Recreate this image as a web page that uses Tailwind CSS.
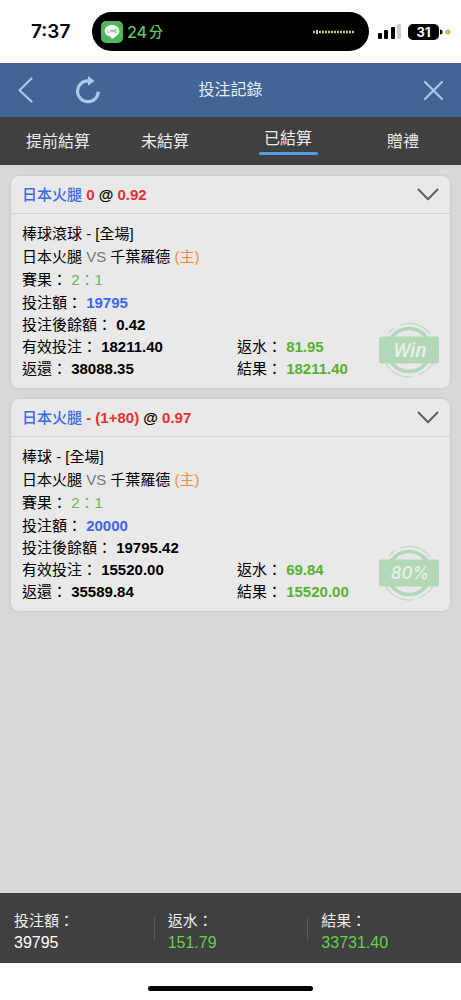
<!DOCTYPE html>
<html lang="zh-Hant">
<head>
  <meta charset="UTF-8">
  <meta name="viewport" content="width=device-width, initial-scale=1.0">
  <title>投注記錄</title>
  <script src="https://cdn.jsdelivr.net/npm/@tailwindcss/browser@4"></script>
</head>
<body class="min-h-screen flex flex-col bg-white text-black text-[15px] font-['Liberation_Sans','Noto_Sans_CJK_TC',sans-serif]">

  <!-- Status bar -->
  <div class="flex items-center h-[63px] pl-[31px] pr-2 font-['Inter','Noto_Sans_CJK_TC',sans-serif]">
    <span class="w-[61px] pt-px text-[19px] font-semibold">7:37</span>
    <div class="flex-1 flex items-center h-[39px] pl-[9px] pr-[14px] rounded-full bg-black">
      <svg class="w-[22px] h-[22px]" viewBox="0 0 22 22">
        <rect width="22" height="22" rx="5" fill="#4fb85c"/>
        <path d="M11 4C6.900 4 3.700 6.600 3.700 9.900c0 2.900 2.600 5.300 6.100 5.700.7.100.6.600.5 1.300-.1.900.3 1.200 1.300.6 2.700-1.600 6.700-4.100 6.700-7.600C18.300 6.600 15.100 4 11 4z" fill="#fff"/>
        <path d="M6.800 8.500v2.800h1.500M9.600 8.500v2.800M10.900 11.300V8.500l2 2.800V8.500M15.700 8.500h-1.500v2.800h1.500M14.200 9.900h1.300" fill="none" stroke="#4fb85c" stroke-width=".8"/>
      </svg>
      <span class="flex items-center gap-[2px] ml-[4px] font-medium text-[#62c466]"><span class="text-base">24</span><span class="text-sm">分</span></span>
      <svg class="ml-auto w-[43px] h-[6px]" viewBox="0 0 43 6">
        <path d="M1 3h42" stroke="#c9d67c" stroke-width="2.400" stroke-dasharray="1.900 1.100"/>
        <path d="M4.950 1v4" stroke="#c9d67c" stroke-width="1.900"/>
      </svg>
    </div>
    <svg class="ml-[9px] w-6 h-4" viewBox="0 0 24 16">
      <rect x="0" y="9" width="4" height="6" rx="1"/>
      <rect x="6" y="6" width="4" height="9" rx="1"/>
      <rect x="13" y="3" width="4" height="12" rx="1"/>
      <rect x="19" y="0" width="4" height="15" rx="1" fill="#cfcfcf"/>
    </svg>
    <span class="ml-[6px] w-[31px] h-4 rounded-[5px] bg-black text-white text-[13px] leading-4 font-bold text-center">31</span>
    <svg class="ml-px w-[13px] h-2" viewBox="0 0 13 8">
      <path d="M0 1.500a2.500 2.500 0 0 1 0 5z"/>
      <circle cx="8" cy="4" r="2.600" fill="#e3b04b"/>
    </svg>
  </div>

  <!-- Title bar -->
  <header class="grid grid-cols-[1fr_auto_1fr] items-center h-[54px] px-[17px] bg-[#436596] text-[#a9c8ec]">
    <div class="flex items-center gap-[42px]">
      <button type="button" aria-label="返回">
        <svg class="w-[17px] h-[26px]" viewBox="0 0 17 26" fill="none" stroke="currentColor" stroke-width="2.200" stroke-linecap="round" stroke-linejoin="round">
          <path d="M14.500 1.500 2.500 13.300 14.500 24.500"/>
        </svg>
      </button>
      <button type="button" aria-label="重新整理">
        <svg class="w-6 h-7" viewBox="0 0 24 28">
          <path d="M14.500 4.900H11.500A10.400 10.400 0 1 0 22.300 15.600" fill="none" stroke="currentColor" stroke-width="3.200"/>
          <path d="M12 0 18.600 4.900 12 9.700z" fill="currentColor"/>
        </svg>
      </button>
    </div>
    <h1 class="text-base text-[#e6eef8]">投注記錄</h1>
    <button type="button" aria-label="關閉" class="justify-self-end">
      <svg class="w-[21px] h-[21px]" viewBox="0 0 21 21" fill="none" stroke="currentColor" stroke-width="2.200" stroke-linecap="round">
        <path d="M2 2 19 19M19 2 2 19"/>
      </svg>
    </button>
  </header>

  <!-- Tabs -->
  <nav class="grid grid-cols-[116fr_98fr_148fr_82fr] items-center h-12 pr-[17px] bg-[#404040] text-base text-[#ececec] text-center">
    <a href="#early" class="pt-px">提前結算</a>
    <a href="#open" class="pt-px">未結算</a>
    <a href="#settled" aria-current="page" class="justify-self-center w-[59px] leading-6 after:block after:mt-px after:h-[3px] after:rounded-full after:bg-[#4f9ee3]">已結算</a>
    <a href="#gift" class="pt-px">贈禮</a>
  </nav>

  <!-- Bet records -->
  <main class="flex-1 flex flex-col gap-[11px] p-[11px] bg-[#d8d8d8]">
    <article class="rounded-lg bg-[#e9e9e9] shadow-[0_0_2px_1px_rgba(0,0,0,0.06)]">
      <div class="flex items-center justify-between h-[38px] px-[11px] border-b border-[#d3d3d3]">
        <h2 class="pt-px font-bold text-[#e5322d]"><span class="font-medium text-[#3f67ec]">日本火腿</span> 0 <span class="text-black">@</span> 0.92</h2>
        <button type="button" aria-label="展開">
          <svg class="w-[22px] h-[13px]" viewBox="0 0 22 13" fill="none" stroke="#606060" stroke-width="2" stroke-linecap="round" stroke-linejoin="round">
            <path d="M1.500 1.500 11 11.200 20.500 1.500"/>
          </svg>
        </button>
      </div>
      <div class="relative px-[11px] pt-2 pb-2">
        <div class="leading-[23px]">
          <p>棒球滾球 - [全場]</p>
          <p>日本火腿 <span class="text-[#777]">VS</span> 千葉羅德 <span class="text-[#f08c3a]">(主)</span></p>
          <p>賽果： <span class="text-[#67b84f]">2：1</span></p>
          <p>投注額： <b class="text-[#3f67ec]">19795</b></p>
        </div>
        <div class="leading-[22px]">
          <p>投注後餘額： <b>0.42</b></p>
          <div class="grid grid-cols-[215fr_202fr]">
            <p>有效投注： <b>18211.40</b></p>
            <p>返水： <b class="text-[#58b035]">81.95</b></p>
            <p>返還： <b>38088.35</b></p>
            <p>結果： <b class="text-[#58b035]">18211.40</b></p>
          </div>
        </div>
        <!-- Result stamp -->
        <svg class="absolute right-[10px] bottom-[10px] w-[62px] h-[56px]" viewBox="0 0 62 56" role="img" aria-label="Win">
          <circle cx="31" cy="28" r="21.500" fill="none" stroke="#b3d8b8" stroke-width="3.600"/>
          <path d="M11 11A26.500 26.500 0 0 1 17 5.500M22 3A26.500 26.500 0 0 1 52.500 12.500M8 42A26.500 26.500 0 0 0 36 54.500M41 52.600A26.500 26.500 0 0 0 55 41" fill="none" stroke="#bcdcc1" stroke-width="1.200"/>
          <rect x="1" y="14.500" width="60" height="27" rx="2.500" fill="#b3d8b8"/>
          <text x="32" y="35" text-anchor="middle" font-family="Open Sans, sans-serif" font-size="19" font-style="italic" font-weight="600" fill="#e9f1ea">Win</text>
        </svg>
      </div>
    </article>

    <article class="rounded-lg bg-[#e9e9e9] shadow-[0_0_2px_1px_rgba(0,0,0,0.06)]">
      <div class="flex items-center justify-between h-[38px] px-[11px] border-b border-[#d3d3d3]">
        <h2 class="pt-px font-bold text-[#e5322d]"><span class="font-medium text-[#3f67ec]">日本火腿</span> - (1+80) <span class="text-black">@</span> 0.97</h2>
        <button type="button" aria-label="展開">
          <svg class="w-[22px] h-[13px]" viewBox="0 0 22 13" fill="none" stroke="#606060" stroke-width="2" stroke-linecap="round" stroke-linejoin="round">
            <path d="M1.500 1.500 11 11.200 20.500 1.500"/>
          </svg>
        </button>
      </div>
      <div class="relative px-[11px] pt-2 pb-2">
        <div class="leading-[23px]">
          <p>棒球 - [全場]</p>
          <p>日本火腿 <span class="text-[#777]">VS</span> 千葉羅德 <span class="text-[#f08c3a]">(主)</span></p>
          <p>賽果： <span class="text-[#67b84f]">2：1</span></p>
          <p>投注額： <b class="text-[#3f67ec]">20000</b></p>
        </div>
        <div class="leading-[22px]">
          <p>投注後餘額： <b>19795.42</b></p>
          <div class="grid grid-cols-[215fr_202fr]">
            <p>有效投注： <b>15520.00</b></p>
            <p>返水： <b class="text-[#58b035]">69.84</b></p>
            <p>返還： <b>35589.84</b></p>
            <p>結果： <b class="text-[#58b035]">15520.00</b></p>
          </div>
        </div>
        <!-- Result stamp -->
        <svg class="absolute right-[10px] bottom-[10px] w-[62px] h-[56px]" viewBox="0 0 62 56" role="img" aria-label="80%">
          <circle cx="31" cy="28" r="21.500" fill="none" stroke="#b3d8b8" stroke-width="3.600"/>
          <path d="M11 11A26.500 26.500 0 0 1 17 5.500M22 3A26.500 26.500 0 0 1 52.500 12.500M8 42A26.500 26.500 0 0 0 36 54.500M41 52.600A26.500 26.500 0 0 0 55 41" fill="none" stroke="#bcdcc1" stroke-width="1.200"/>
          <rect x="1" y="14.500" width="60" height="27" rx="2.500" fill="#b3d8b8"/>
          <text x="32" y="34" text-anchor="middle" font-family="Inter, sans-serif" font-size="17" font-style="italic" font-weight="500" fill="#e9f1ea">80%</text>
        </svg>
      </div>
    </article>
  </main>

  <!-- Totals -->
  <footer>
    <dl class="grid grid-cols-3 items-center h-[70px] bg-[#404040] text-[#ececec] leading-[22px]">
      <div class="pl-[14px] pt-[7px]">
        <dt>投注額：</dt>
        <dd class="text-base leading-[22px] text-white">39795</dd>
      </div>
      <div class="relative pl-[14px] pt-[7px] before:absolute before:left-0 before:top-[14px] before:h-6 before:w-px before:bg-[#5c5c5c]">
        <dt>返水：</dt>
        <dd class="text-base leading-[22px] text-[#66cf4b]">151.79</dd>
      </div>
      <div class="relative pl-[14px] pt-[7px] before:absolute before:left-0 before:top-[14px] before:h-6 before:w-px before:bg-[#5c5c5c]">
        <dt>結果：</dt>
        <dd class="text-base leading-[22px] text-[#66cf4b]">33731.40</dd>
      </div>
    </dl>
    <div class="flex justify-center h-[37px] pt-[23px]">
      <div class="w-[165px] h-[5px] rounded-full bg-black"></div>
    </div>
  </footer>
</body>
</html>
